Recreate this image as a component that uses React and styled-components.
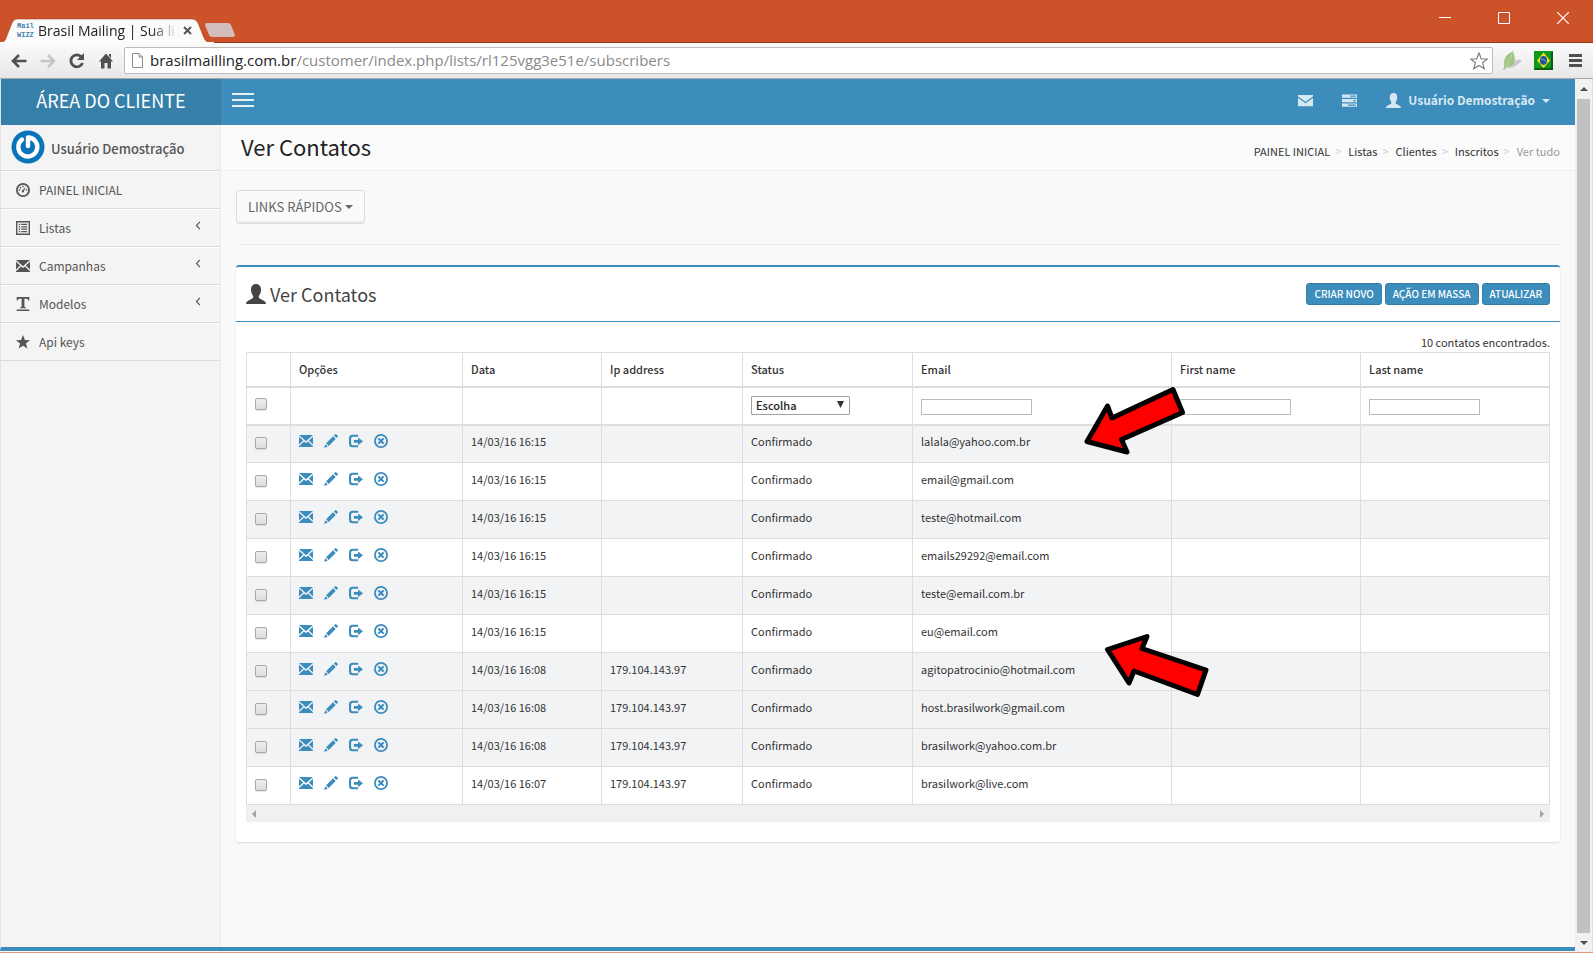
import {useState} from "react";
import styled, {createGlobalStyle} from "styled-components";

const sans = `"Noto Sans CJK SC", "Open Sans", sans-serif`
const chromeFont = `"Open Sans", "Noto Sans", sans-serif`
const blue = "#3c8dbc"

const GlobalStyle = createGlobalStyle`
    *, *::before, *::after {
        box-sizing: border-box;
    }
    body {
        margin: 0;
        font-family: ${sans};
        font-size: 12px;
        line-height: 20px;
        color: #333;
        background-color: #f9f9f9;
    }
    button, input, select {
        font-family: inherit;
        margin: 0;
    }
    a {
        color: inherit;
        text-decoration: none;
    }
    svg {
        display: block;
        flex: none;
    }
`

const Window = styled.div`
    display: flex;
    flex-direction: column;
    min-height: 100vh;
    border-bottom: 1px solid #e0987c;
`

/* browser frame */

const TitleBar = styled.div`
    display: flex;
    align-items: flex-end;
    height: 43px;
    padding-right: 1px;
    background-color: #cb5229;
    border-bottom: 1px solid #97391b;
`

const Tab = styled.div`
    position: relative;
    display: flex;
    align-items: center;
    gap: 5px;
    width: 209px;
    height: 25px;
    margin-bottom: -1px;
    padding: 0 17px;
    font-family: ${chromeFont};
    font-size: 14px;
    color: #222;
`

const TabShape = styled.svg`
    position: absolute;
    left: 0;
    top: 0;
`

const Favicon = styled.span`
    position: relative;
    width: 16px;
    font-family: "Liberation Mono", monospace;
    font-size: 7px;
    font-weight: 700;
    line-height: 9px;
    color: #3c83ab;
`

const TabTitle = styled.span`
    position: relative;
    flex: 1;
    white-space: nowrap;
    mask-image: linear-gradient(90deg, #000 80%, transparent);
`

const PlainButton = styled.button`
    position: relative;
    display: flex;
    align-items: center;
    justify-content: center;
    padding: 0;
    border: 0;
    background: none;
    color: inherit;
`

const NewTab = styled(PlainButton)`
    width: 30px;
    height: 14px;
    margin: 0 auto 5px -4px;
`

const WindowButtons = styled.div`
    display: flex;
    align-self: flex-start;
    color: #fff;
`

const WindowButton = styled(PlainButton)`
    width: 59px;
    height: 36px;
`

const Toolbar = styled.div`
    display: flex;
    align-items: center;
    height: 36px;
    padding: 0 3px 0 4px;
    background: linear-gradient(#fbfbfb, #e7e7e7);
    border-bottom: 1px solid #a9a9a9;
    color: #505050;
`

const ToolButton = styled(PlainButton)`
    width: 29px;
    height: 27px;
    color: ${props => props.$dim ? "#c6c6c6" : "#505050"};
`

const AddressBar = styled.div`
    display: flex;
    align-items: center;
    flex: 1;
    gap: 7px;
    height: 27px;
    margin-left: 4px;
    padding: 0 4px 0 7px;
    border: 1px solid #bcbcbc;
    border-radius: 2px;
    background-color: #fff;
    font-family: ${chromeFont};
    font-size: 15px;
    color: #8a8a8a;
`

const Url = styled.a`
    flex: 1;
    padding-bottom: 2px;
`

const Host = styled.span`
    color: #222;
`

const Extensions = styled.div`
    display: flex;
    gap: 3px;
    padding-left: 4px;
`

/* site */

const Viewport = styled.div`
    display: flex;
    flex: 1;
`

const Site = styled.div`
    display: flex;
    flex-direction: column;
    flex: 1;
    min-width: 0;
    margin-bottom: 1px;
    border-left: 1px solid #e3e3e3;
    border-bottom: 4px solid ${blue};
`

const Header = styled.header`
    display: flex;
    height: 46px;
    background-color: ${blue};
    color: #d8e8f2;
`

const Brand = styled.a`
    display: flex;
    align-items: center;
    justify-content: center;
    width: 220px;
    padding-bottom: 4px;
    background-color: #367fa9;
    color: #fff;
    font-size: 18px;
`

const MenuToggle = styled(PlainButton)`
    width: 44px;
    padding-bottom: 4px;
`

const TopNav = styled.nav`
    display: flex;
    align-items: center;
    gap: 29px;
    margin-left: auto;
    padding: 0 25px 4px 0;
    font-size: 12px;
    font-weight: 700;
`

const NavLink = styled.a`
    display: flex;
    align-items: center;
    gap: 7px;
`

const Caret = styled.span`
    width: 0;
    margin-top: 2px;
    border: 4px solid transparent;
    border-top-color: currentColor;
    border-bottom-width: 0;
`

const Columns = styled.div`
    display: flex;
    flex: 1;
`

const Sidebar = styled.aside`
    width: 220px;
    background-color: #f4f4f4;
    border-right: 1px solid #ececec;
    color: #555;
`

const UserPanel = styled.div`
    display: flex;
    align-items: center;
    gap: 6px;
    height: 46px;
    padding: 0 10px 1px;
    border-bottom: 1px solid #dbdbdb;
    font-size: 13px;
    font-weight: 500;
`

const UserName = styled.span`
    padding-top: 4px;
`

const Menu = styled.ul`
    margin: 0;
    padding: 0;
    list-style: none;
`

const MenuLink = styled.a`
    display: flex;
    align-items: center;
    gap: 9px;
    height: 38px;
    padding: 0 17px 0 15px;
    border-top: 1px solid #fff;
    border-bottom: 1px solid #dbdbdb;

    svg:last-child {
        margin: 0 0 6px auto;
    }
`

const Main = styled.main`
    flex: 1;
    min-width: 0;
`

const PageHeader = styled.div`
    display: flex;
    align-items: center;
    justify-content: space-between;
    height: 46px;
    padding: 0 15px 4px 20px;
    background-color: #fbfbfb;
    border-bottom: 1px solid #eee;
`

const PageTitle = styled.h1`
    margin: 0;
    font-size: 22px;
    font-weight: 400;
    line-height: 40px;
    color: #222;
`

const Breadcrumb = styled.ol`
    display: flex;
    margin: 0;
    padding: 10px 0 0;
    list-style: none;
    font-size: 11px;

    li + li::before {
        content: ">";
        padding: 0 7px 0 5px;
        color: #ccc;
    }
`

const Crumb = styled.li`
    color: ${props => props.$active ? "#999" : "#333"};
`

const Content = styled.section`
    padding: 19px 15px;
`

const QuickLinks = styled.button`
    display: flex;
    align-items: center;
    gap: 3px;
    height: 34px;
    padding: 0 11px 2px;
    border: 1px solid #ddd;
    border-radius: 3px;
    background-color: #fafafa;
    box-shadow: inset 0 -2px 0 rgba(0, 0, 0, 0.06);
    color: #666;
    font-size: 13px;
`

const Divider = styled.hr`
    margin: 20px 0;
    border: 0;
    border-top: 1px solid #eee;
`

const Box = styled.div`
    position: relative;
    border-top: 2px solid ${blue};
    border-radius: 3px;
    background-color: #fff;
    box-shadow: 0 1px 2px rgba(0, 0, 0, 0.12);
`

const BoxHeader = styled.div`
    display: flex;
    align-items: center;
    justify-content: space-between;
    height: 55px;
    padding: 0 10px;
    border-bottom: 1px solid ${blue};
`

const BoxTitle = styled.h3`
    display: flex;
    align-items: center;
    gap: 4px;
    margin: 0;
    font-size: 18px;
    font-weight: 400;
    color: #444;
`

const BoxTools = styled.div`
    display: flex;
    gap: 3px;
`

const SmallButton = styled.button`
    height: 22px;
    padding: 0 7px;
    border: 1px solid #367fa9;
    border-radius: 3px;
    background-color: ${blue};
    color: #fff;
    font-size: 10px;
    font-weight: 500;
    line-height: 18px;
`

const BoxBody = styled.div`
    padding: 10px 10px 20px;
    font-size: 11px;
`

const Summary = styled.div`
    text-align: right;
`

const Table = styled.table`
    width: 100%;
    table-layout: fixed;
    border-collapse: collapse;
    border: 1px solid #ddd;
    font-size: 11px;

    th, td {
        padding: 0 8px 5px;
        border: 1px solid #ddd;
        text-align: left;
    }
    th {
        height: 34px;
        padding-bottom: 1px;
        border-bottom-width: 2px;
        font-weight: 500;
    }
`

const FilterRow = styled.tr`
    td {
        height: 38px;
        padding-bottom: 1px;
        border-bottom-width: 2px;
    }
    td:first-child {
        padding-bottom: 6px;
    }
`

const Row = styled.tr`
    height: 38px;
    background-color: ${props => props.$shaded ? "#f2f3f5" : "#fff"};
`

const Check = styled.input`
    appearance: none;
    display: block;
    width: 12px;
    height: 12px;
    border: 1px solid #a8a8a8;
    border-radius: 2px;
    background: linear-gradient(#eee, #dcdcdc);
    box-shadow: 0 1px 1px rgba(0, 0, 0, 0.1);

    td > & {
        margin-top: 3px;
    }
`

const TextFilter = styled.input`
    display: block;
    width: 111px;
    height: 16px;
    border: 1px solid #bbb;
    background-color: #fff;

    td > & {
        margin-top: 3px;
    }
`

const SelectWrap = styled.div`
    position: relative;
    width: 99px;
`

const Select = styled.select`
    appearance: none;
    display: block;
    width: 100%;
    height: 19px;
    padding: 0 4px;
    border: 1px solid #a0a0a0;
    border-radius: 1px;
    background-color: #fff;
    color: #222;
    font-size: 11px;
    font-weight: 500;
    line-height: 17px;
`

const SelectArrow = styled.svg`
    position: absolute;
    right: 6px;
    top: 5px;
    pointer-events: none;
`

const Actions = styled.div`
    display: flex;
    gap: 11px;
    padding-bottom: 1px;
    color: ${blue};
`

const HScroll = styled.div`
    display: flex;
    align-items: center;
    justify-content: space-between;
    height: 17px;
    padding: 0 6px;
    background-color: #f0f0f0;
    color: #a3a3a3;
`

const VScroll = styled.div`
    display: flex;
    flex-direction: column;
    align-items: center;
    gap: 8px;
    width: 18px;
    padding: 8px 2px 7px;
    background-color: #f1f1f1;
    border-right: 1px solid #dcdcdc;
    color: #505050;
`

const Thumb = styled.div`
    flex: 1;
    width: 13px;
    background-color: #c1c1c1;
`

const Pointer = styled.svg`
    position: absolute;
    left: ${props => props.$left};
    top: ${props => props.$top};
    pointer-events: none;
`

/* 20x20 drawings */
const shapes = {
    envelope: <path d="M0 1.5H20L10 10.5ZM0 3.8 6 9.3 0 15ZM20 3.8V15L14 9.300ZM0 18.5V17.4L7.2 10.6 10 13 12.8 10.6 20 17.4V18.5Z"/>,
    mail: <path d="M0 2.500H20V4.500L10 11.500 0 4.500ZM0 6.500 10 13.500 20 6.500V17.500H0Z"/>,
    pencil: <path d="M0 20 2 14.5 5.5 18ZM3 13.3 13 3.3 16.7 7 6.7 17ZM14.2 2.2 16 .5Q17-.2 17.8.6L19.4 2.2Q20.2 3 19.5 4L17.8 5.8Z"/>,
    exit: <path d="M13 1H5Q0 1 0 6V14Q0 19 5 19H13V16H5.5Q3 16 3 13.5V6.5Q3 4 5.5 4H13ZM13 5 20 10.5 13 16V12.5H7V8.5H13Z"/>,
    remove: <path fillRule="evenodd" d="M10 0A10 10 0 1 1 10 20 10 10 0 0 1 10 0ZM10 2.6A7.4 7.4 0 1 0 10 17.4 7.4 7.4 0 0 0 10 2.6ZM7.2 5.2 10 8 12.8 5.2 14.8 7.2 12 10 14.8 12.8 12.8 14.8 10 12 7.2 14.8 5.2 12.8 8 10 5.2 7.2Z"/>,
    dashboard: <>
        <path fillRule="evenodd" d="M10 0A10 10 0 1 1 10 20 10 10 0 0 1 10 0ZM10 2.6A7.4 7.4 0 1 0 10 17.4 7.4 7.4 0 0 0 10 2.6Z"/>
        <path d="M9 4h2v2H9ZM5.4 5.7h2v2h-2ZM4 9h2v2H4ZM14 9h2v2h-2ZM14.6 5.4 11.4 11.4A1.7 1.7 0 1 1 9.2 10.2Z"/>
    </>,
    list: <path fillRule="evenodd" d="M0 0H20V20H0ZM2 2V18H18V2ZM4 4h2v2H4ZM7.5 4H16v1.8H7.5ZM4 7.4h2v2H4ZM7.5 7.4H16v1.8H7.5ZM4 10.8h2v2H4ZM7.5 10.8H16v1.8H7.5ZM4 14.2h2v2H4ZM7.5 14.2H16V16H7.5Z"/>,
    text: <path d="M1 0H19V5H17.5Q17 2.5 15 2.5H12V13.5Q12 15 14.5 15V16.2H5.5V15Q8 15 8 13.5V2.5H5Q3 2.5 2.5 5H1ZM1 18H19V20H1Z"/>,
    star: <path d="M10 0 12.8 7.2 20 7.4 14.2 12 16.3 19.4 10 15.2 3.7 19.4 5.8 12 0 7.4 7.2 7.2Z"/>,
    user: <path d="M10 0C13.5 0 15 2.5 15 5.5 15 8.5 14 10.5 12.8 12V13.6C13 15.2 20 16.2 20 20H0C0 16.2 7 15.2 7.2 13.6V12C6 10.5 5 8.5 5 5.5 5 2.5 6.5 0 10 0Z"/>,
    tasks: <path fillRule="evenodd" d="M0 2H20V6.4H0ZM11 3.2V5H18.5V3.2ZM0 8H20V12.4H0ZM15 9.2V11H18.5V9.2ZM0 14H20V18.4H0ZM8 15.2V17H18.5V15.2Z"/>,
    chevron: <path d="M13 2 5.5 10 13 18" fill="none" stroke="currentColor" strokeWidth="2.6"/>,
}

function Icon({name, size = 14}) {
    return (
        <svg width={size} height={size} viewBox="0 0 20 20" fill="currentColor" aria-hidden="true">{shapes[name]}</svg>
    )
}

function Triangle({points, width, height}) {
    return (
        <svg width={width} height={height} fill="currentColor" aria-hidden="true"><polygon points={points}/></svg>
    )
}

function Avatar() {
    return (
        <svg width="34" height="34" viewBox="0 0 34 34" aria-hidden="true">
            <circle cx="17" cy="17" r="16.5" fill="#0a74b9"/>
            <path d="M11 9.5A9.5 9.5 0 1 0 17 7.5V16" fill="none" stroke="#fff" strokeWidth="4.4" strokeLinecap="round" strokeLinejoin="round"/>
        </svg>
    )
}

const menu = [
    {label: "PAINEL INICIAL", icon: "dashboard"},
    {label: "Listas", icon: "list", nested: true},
    {label: "Campanhas", icon: "envelope", nested: true},
    {label: "Modelos", icon: "text", nested: true},
    {label: "Api keys", icon: "star"},
]

const crumbs = ["PAINEL INICIAL", "Listas", "Clientes", "Inscritos", "Ver tudo"]

const columns = [
    {label: "", width: 44},
    {label: "Opções", width: 172},
    {label: "Data", width: 139},
    {label: "Ip address", width: 141},
    {label: "Status", width: 170},
    {label: "Email", width: 259},
    {label: "First name", width: 189},
    {label: "Last name", width: 189},
]

const contacts = [
    {email: "lalala@yahoo.com.br", date: "14/03/16 16:15", shaded: true},
    {email: "email@gmail.com", date: "14/03/16 16:15"},
    {email: "teste@hotmail.com", date: "14/03/16 16:15", shaded: true},
    {email: "emails29292@email.com", date: "14/03/16 16:15"},
    {email: "teste@email.com.br", date: "14/03/16 16:15", shaded: true},
    {email: "eu@email.com", date: "14/03/16 16:15"},
    {email: "agitopatrocinio@hotmail.com", date: "14/03/16 16:08", ip: "179.104.143.97", shaded: true},
    {email: "host.brasilwork@gmail.com", date: "14/03/16 16:08", ip: "179.104.143.97", shaded: true},
    {email: "brasilwork@yahoo.com.br", date: "14/03/16 16:08", ip: "179.104.143.97", shaded: true},
    {email: "brasilwork@live.com", date: "14/03/16 16:07", ip: "179.104.143.97"},
]

const actions = [
    {icon: "envelope", label: "Campanhas"},
    {icon: "pencil", label: "Editar"},
    {icon: "exit", label: "Sair da lista"},
    {icon: "remove", label: "Remover"},
]

function BrowserFrame() {
    return (
        <>
            <TitleBar>
                <Tab>
                    <TabShape width="214" height="25" aria-hidden="true">
                        <path d="M0 25C6 24 6 20 8 15L12 5Q14 1 17 1H192Q196 1 198 5L204 20Q206 25 212 25Z" fill="#fbfbfb" stroke="#97391b" strokeOpacity="0.5"/>
                        <path d="M0 25H214" stroke="#fbfbfb" strokeWidth="2"/>
                    </TabShape>
                    <Favicon>Mail WIZZ</Favicon>
                    <TabTitle>Brasil Mailing | Sua li</TabTitle>
                    <PlainButton aria-label="Fechar guia">
                        <svg width="9" height="9"><path d="M1 1 8 8M8 1 1 8" stroke="#555" strokeWidth="2"/></svg>
                    </PlainButton>
                </Tab>
                <NewTab aria-label="Nova guia">
                    <svg width="30" height="14"><path d="M2 0H23Q25 0 26 2L30 12Q30 14 28 14H7Q5 14 4 12L0 2Q0 0 2 0Z" fill="#d3bdba"/></svg>
                </NewTab>
                <WindowButtons>
                    <WindowButton aria-label="Minimizar">
                        <svg width="12" height="12"><path d="M0 5.5H12" stroke="#fff"/></svg>
                    </WindowButton>
                    <WindowButton aria-label="Maximizar">
                        <svg width="12" height="12"><path d="M.5.5H11.5V11.5H.5Z" fill="none" stroke="#fff"/></svg>
                    </WindowButton>
                    <WindowButton aria-label="Fechar">
                        <svg width="12" height="12"><path d="M0 0 12 12M12 0 0 12" stroke="#fff" strokeWidth="1.2"/></svg>
                    </WindowButton>
                </WindowButtons>
            </TitleBar>
            <Toolbar>
                <ToolButton aria-label="Voltar">
                    <svg width="16" height="14" fill="none" stroke="currentColor" strokeWidth="2.6"><path d="M15.5 7H2M8 1 2 7 8 13"/></svg>
                </ToolButton>
                <ToolButton aria-label="Avançar" $dim>
                    <svg width="16" height="14" fill="none" stroke="currentColor" strokeWidth="2.6"><path d="M.5 7H14M8 1 14 7 8 13"/></svg>
                </ToolButton>
                <ToolButton aria-label="Atualizar página">
                    <svg width="16" height="16"><path d="M12.5 4A6 6 0 1 0 13.5 10" fill="none" stroke="currentColor" strokeWidth="2.8"/><path d="M15 0V7H8Z" fill="currentColor"/></svg>
                </ToolButton>
                <ToolButton aria-label="Página inicial">
                    <svg width="14" height="16" viewBox="0 0 14 16" fill="currentColor"><path d="M7 .5 14 8.500H12V15.500H8.500V10H5.500V15.500H2V8.500H0ZM10 1H12V5L10 3Z"/></svg>
                </ToolButton>
                <AddressBar>
                    <svg width="11" height="15" fill="#fff" stroke="#8a8a8a"><path d="M.5.5H7L10.5 4V14.5H.5ZM7 .5V4H10.5"/></svg>
                    <Url href="#"><Host>brasilmailling.com.br</Host>/customer/index.php/lists/rl125vgg3e51e/subscribers</Url>
                    <svg width="18" height="18" viewBox="0 0 18 18"><path d="M9 1 11.3 6.8 17.3 7 12.6 10.8 14.2 16.6 9 13.4 3.8 16.6 5.4 10.8.7 7 6.7 6.8Z" fill="#fff" stroke="#808080" strokeWidth="1.2"/></svg>
                </AddressBar>
                <Extensions>
                    <ToolButton aria-label="Extensão folha">
                        <svg width="20" height="20">
                            <path d="M5 17Q10 18 15 14 20 11 19 9 15 7 11 12Z" fill="#c9c9c9"/>
                            <path d="M1 19Q3 16 2 13 1 5 11 0 12 4 13 8 13 15 5 16L2 19Z" fill="#a3c583"/>
                            <path d="M4 15Q8 10 10 3" fill="none" stroke="#bdd6a3"/>
                        </svg>
                    </ToolButton>
                    <ToolButton aria-label="Extensão Brasil">
                        <svg width="19" height="19">
                            <path d="M0 0H19V19H0Z" fill="#0d9a1c"/>
                            <path d="M0 19H19V0L17 2V17H2Z" fill="#0a5a14"/>
                            <path d="M9.5 1.500 16 9.5 9.5 17 3 9.5Z" fill="#f3e11d"/>
                            <ellipse cx="9.5" cy="9.5" rx="3.6" ry="4.4" fill="#24539b"/>
                            <path d="M6.5 8Q10 8 12.5 11" fill="none" stroke="#7fa3cc"/>
                        </svg>
                    </ToolButton>
                    <ToolButton aria-label="Menu do navegador">
                        <svg width="13" height="13" fill="currentColor"><path d="M0 0H13V3H0ZM0 5H13V8H0ZM0 10H13V13H0Z"/></svg>
                    </ToolButton>
                </Extensions>
            </Toolbar>
        </>
    )
}

function ContactsTable() {
    const [selected, setSelected] = useState([])
    const [status, setStatus] = useState("")

    function toggle(email) {
        setSelected(selected.includes(email) ? selected.filter(item => item !== email) : [...selected, email])
    }

    function toggleAll() {
        setSelected(selected.length === contacts.length ? [] : contacts.map(contact => contact.email))
    }

    return (
        <Table>
            <colgroup>
                {columns.map(col => <col key={col.label} width={col.width}/>)}
            </colgroup>
            <thead>
                <tr>
                    {columns.map(col => <th key={col.label}>{col.label}</th>)}
                </tr>
                <FilterRow>
                    <td><Check type="checkbox" aria-label="Selecionar todos" checked={selected.length === contacts.length} onChange={toggleAll}/></td>
                    <td/>
                    <td/>
                    <td/>
                    <td>
                        <SelectWrap>
                            <Select aria-label="Status" value={status} onChange={e => setStatus(e.target.value)}>
                                <option value="">Escolha</option>
                                <option value="confirmed">Confirmado</option>
                            </Select>
                            <SelectArrow width="7" height="7" aria-hidden="true"><path d="M0 0H7L3.5 7Z" fill="#333"/></SelectArrow>
                        </SelectWrap>
                    </td>
                    <td><TextFilter type="text" aria-label="Email"/></td>
                    <td><TextFilter type="text" aria-label="First name"/></td>
                    <td><TextFilter type="text" aria-label="Last name"/></td>
                </FilterRow>
            </thead>
            <tbody>
                {contacts.map(contact => (
                    <Row key={contact.email} $shaded={contact.shaded}>
                        <td><Check type="checkbox" aria-label={contact.email} checked={selected.includes(contact.email)} onChange={() => toggle(contact.email)}/></td>
                        <td>
                            <Actions>
                                {actions.map(action => (
                                    <a key={action.icon} href="#" aria-label={action.label}><Icon name={action.icon}/></a>
                                ))}
                            </Actions>
                        </td>
                        <td>{contact.date}</td>
                        <td>{contact.ip}</td>
                        <td>Confirmado</td>
                        <td>{contact.email}</td>
                        <td/>
                        <td/>
                    </Row>
                ))}
            </tbody>
        </Table>
    )
}

function App() {
    return (
        <Window>
            <GlobalStyle/>
            <BrowserFrame/>
            <Viewport>
                <Site>
                    <Header>
                        <Brand href="#">ÁREA DO CLIENTE</Brand>
                        <MenuToggle aria-label="Alternar menu">
                            <svg width="22" height="14" fill="#e4eff6"><path d="M0 0H22V2H0ZM0 6H22V8H0ZM0 12H22V14H0Z"/></svg>
                        </MenuToggle>
                        <TopNav>
                            <NavLink href="#" aria-label="Mensagens"><Icon name="mail" size={15}/></NavLink>
                            <NavLink href="#" aria-label="Tarefas"><Icon name="tasks" size={15}/></NavLink>
                            <NavLink href="#"><Icon name="user" size={15}/>Usuário Demostração <Caret/></NavLink>
                        </TopNav>
                    </Header>
                    <Columns>
                        <Sidebar>
                            <UserPanel>
                                <Avatar/>
                                <UserName>Usuário Demostração</UserName>
                            </UserPanel>
                            <Menu>
                                {menu.map(item => (
                                    <li key={item.label}>
                                        <MenuLink href="#">
                                            <Icon name={item.icon}/>
                                            <span>{item.label}</span>
                                            {item.nested && <Icon name="chevron" size={9}/>}
                                        </MenuLink>
                                    </li>
                                ))}
                            </Menu>
                        </Sidebar>
                        <Main>
                            <PageHeader>
                                <PageTitle>Ver Contatos</PageTitle>
                                <Breadcrumb>
                                    {crumbs.map((crumb, i) => (
                                        <Crumb key={crumb} $active={i === crumbs.length - 1}>
                                            {i === crumbs.length - 1 ? crumb : <a href="#">{crumb}</a>}
                                        </Crumb>
                                    ))}
                                </Breadcrumb>
                            </PageHeader>
                            <Content>
                                <QuickLinks>LINKS RÁPIDOS <Caret/></QuickLinks>
                                <Divider/>
                                <Box>
                                    <BoxHeader>
                                        <BoxTitle><Icon name="user" size={20}/>Ver Contatos</BoxTitle>
                                        <BoxTools>
                                            <SmallButton>CRIAR NOVO</SmallButton>
                                            <SmallButton>AÇÃO EM MASSA</SmallButton>
                                            <SmallButton>ATUALIZAR</SmallButton>
                                        </BoxTools>
                                    </BoxHeader>
                                    <BoxBody>
                                        <Summary>10 contatos encontrados.</Summary>
                                        <ContactsTable/>
                                        <HScroll>
                                            <Triangle width={4} height={8} points="4,0 4,8 0,4"/>
                                            <Triangle width={4} height={8} points="0,0 0,8 4,4"/>
                                        </HScroll>
                                    </BoxBody>
                                    <Pointer $left="848px" $top="118px" width="106" height="72" fill="#f00" stroke="#000" strokeWidth="5" strokeLinejoin="round" aria-hidden="true">
                                        <path d="M3 56.5 23.5 21 28 33 89 4.5 98.5 27.5 37.5 54.5 43 67Z"/>
                                    </Pointer>
                                    <Pointer $left="868px" $top="366px" width="106" height="66" fill="#f00" stroke="#000" strokeWidth="5" strokeLinejoin="round" aria-hidden="true">
                                        <path d="M3.5 16.5 43 3.5 38 15.5 102 37 93.5 61.5 30 38 25 50Z"/>
                                    </Pointer>
                                </Box>
                            </Content>
                        </Main>
                    </Columns>
                </Site>
                <VScroll>
                    <Triangle width={8} height={4} points="0,4 8,4 4,0"/>
                    <Thumb/>
                    <Triangle width={8} height={4} points="0,0 8,0 4,4"/>
                </VScroll>
            </Viewport>
        </Window>
    )
}

export default App;
